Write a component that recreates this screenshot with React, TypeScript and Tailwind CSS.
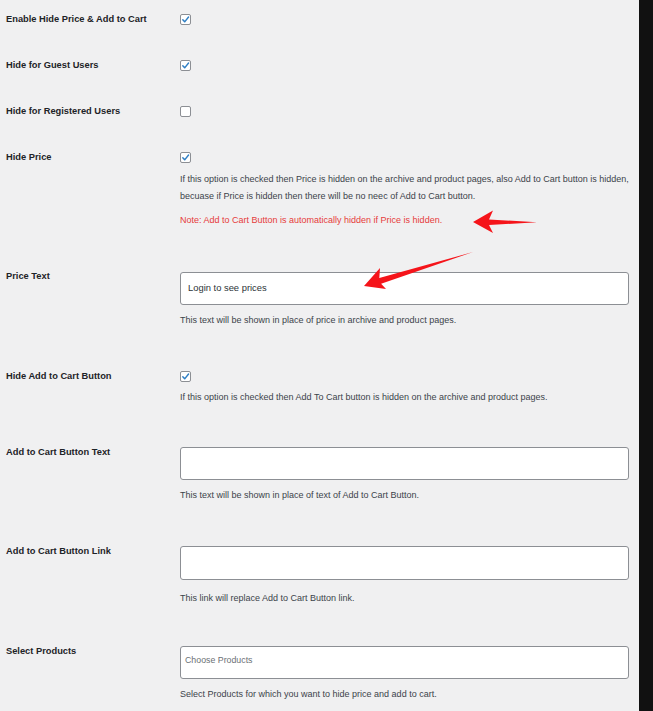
import type { ReactNode } from "react";

const font = { fontFamily: '"Liberation Sans", Arial, sans-serif' };

function Checkbox({ checked }: { checked?: boolean }) {
  return (
    <div className="mt-[3px] w-[11px] h-[11px] rounded-[2px] border border-[#8c8f94] bg-white flex items-center justify-center">
      {checked && (
        <svg width="9" height="9" viewBox="0 0 10 10">
          <path d="M2 5.2 L4.1 7.6 L8.4 2.2" fill="none" stroke="#2f7fc4" strokeWidth="1.6" strokeLinecap="round" strokeLinejoin="round" />
        </svg>
      )}
    </div>
  );
}

function Desc({ children, className = "" }: { children: ReactNode; className?: string }) {
  return <p className={`text-[9px] leading-[17px] text-[#3c434a] whitespace-nowrap ${className}`}>{children}</p>;
}

function Row({ label, pb, children }: { label: string; pb: string; children: ReactNode }) {
  return (
    <div className={`flex items-start pt-[11px] ${pb}`}>
      <div className="w-[180px] shrink-0 pl-[6px] text-[9.3px] leading-[16px] font-bold text-[#1d2327]">{label}</div>
      <div className="w-[449px]">{children}</div>
    </div>
  );
}

function TextBox({ value, h = "h-[33px]", mt = "mt-[4px]" }: { value?: string; h?: string; mt?: string }) {
  return (
    <div className={`${mt} ${h} rounded-[3px] border border-[#8c8f94] bg-white flex items-center pl-[7px] text-[9.4px] text-[#2c3338]`}>
      {value}
    </div>
  );
}

export default function App() {
  return (
    <div className="relative flex w-full h-[711px] overflow-hidden bg-[#f0f0f1]" style={font}>
      <div className="w-[639px] shrink-0">
        <Row label="Enable Hide Price & Add to Cart" pb="pb-[19px]">
          <Checkbox checked />
        </Row>
        <Row label="Hide for Guest Users" pb="pb-[19px]">
          <Checkbox checked />
        </Row>
        <Row label="Hide for Registered Users" pb="pb-[19px]">
          <Checkbox />
        </Row>
        <Row label="Hide Price" pb="pb-[28px]">
          <Checkbox checked />
          <Desc className="mt-[8px]">
            If this option is checked then Price is hidden on the archive and product pages, also Add to Cart button is hidden,
            <br />
            becuase if Price is hidden then there will be no neec of Add to Cart button.
          </Desc>
          <p className="mt-[7px] text-[9px] leading-[17px] text-[#e63b3b]">
            Note: Add to Cart Button is automatically hidden if Price is hidden.
          </p>
        </Row>
        <Row label="Price Text" pb="pb-[28px]">
          <TextBox value="Login to see prices" />
          <Desc className="mt-[7px]">This text will be shown in place of price in archive and product pages.</Desc>
        </Row>
        <Row label="Hide Add to Cart Button" pb="pb-[27px]">
          <Checkbox checked />
          <Desc className="mt-[7px]">If this option is checked then Add To Cart button is hidden on the archive and product pages.</Desc>
        </Row>
        <Row label="Add to Cart Button Text" pb="pb-[28px]">
          <TextBox mt="mt-[3px]" />
          <Desc className="mt-[7px]">This text will be shown in place of text of Add to Cart Button.</Desc>
        </Row>
        <Row label="Add to Cart Button Link" pb="pb-[25px]">
          <TextBox h="h-[34px]" mt="mt-[3px]" />
          <Desc className="mt-[10px]">This link will replace Add to Cart Button link.</Desc>
        </Row>
        <Row label="Select Products" pb="pb-[10px]">
          <div className="mt-[3px] h-[33px] rounded-[3px] border border-[#8c8f94] bg-white pl-[4px] pt-[6px] text-[8.8px] leading-[14px] text-[#6b7075]">
            Choose Products
          </div>
          <Desc className="mt-[7px]">Select Products for which you want to hide price and add to cart.</Desc>
        </Row>
      </div>
      <div className="flex-1 bg-[#111111]" />

      {/* annotation arrows */}
      <svg className="absolute inset-0 pointer-events-none" width="653" height="711" viewBox="0 0 653 711">
        <polygon points="473,222 493,210.5 489,219.5 537,222.3 489,225 493,233" fill="#f5141a" />
        <polygon points="364,286 380,268 379.3,278.1 473,252 381.1,283.8 386,289" fill="#f5141a" />
      </svg>
    </div>
  );
}
